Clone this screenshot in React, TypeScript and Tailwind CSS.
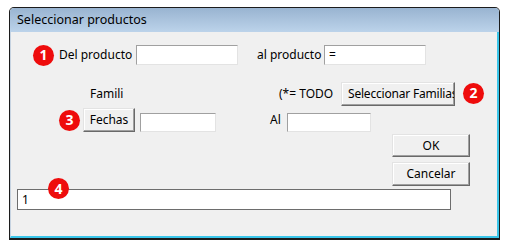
import type { ReactNode } from "react";

const font = { fontFamily: '"Noto Sans", "Open Sans", sans-serif' };

function Badge({ n, className = "" }: { n: string; className?: string }) {
  return (
    <span
      className={`flex h-[21px] w-[21px] shrink-0 items-center justify-center rounded-full bg-[#ee0c0c] text-[14px] font-bold leading-none text-white ${className}`}
    >
      {n}
    </span>
  );
}

function Btn({ children, className = "" }: { children: ReactNode; className?: string }) {
  return (
    <div
      className={`flex shrink-0 items-center overflow-hidden whitespace-nowrap border-t border-l border-r border-b border-t-[#e3e3e3] border-l-[#e3e3e3] border-r-[#696969] border-b-[#696969] bg-[#f0f0f0] text-[12px] text-black shadow-[inset_-1px_-1px_#a0a0a0,inset_1px_1px_#ffffff] ${className}`}
    >
      {children}
    </div>
  );
}

function Field({ value = "", className = "" }: { value?: string; className?: string }) {
  return (
    <div
      className={`flex shrink-0 items-center border-t border-l border-r border-b border-t-[#a0a0a0] border-l-[#a0a0a0] border-r-[#e3e3e3] border-b-[#e3e3e3] bg-white pl-[4px] text-[12px] text-black ${className}`}
    >
      {value}
    </div>
  );
}

export default function App() {
  return (
    <div className="h-[247px] w-[507px] bg-white pt-[7px] pl-[9px]" style={font}>
      <div className="flex h-[233px] w-[491px] flex-col overflow-hidden rounded-t-[5px] border border-b-2 border-[#1c1c1c]">
        <div className="flex h-[24px] items-center bg-gradient-to-b from-[#99b4d1] to-[#bcd3ea] pl-[7px] text-[12.5px] text-black">
          Seleccionar productos
        </div>
        <div className="relative flex flex-1 flex-col border-l border-r-2 border-b-2 border-l-[#c6d3e1] border-r-[#3ac6ea] border-b-[#3ac6ea] bg-[#f0f0f0] text-[12px] text-black">
          {/* row 1 */}
          <div className="mt-[13px] flex h-[20px] items-center">
            <Badge n="1" className="ml-[22px]" />
            <span className="ml-[5px] w-[77px]">Del producto</span>
            <Field className="h-[20px] w-[102px]" />
            <span className="ml-[19px] w-[67px]">al producto</span>
            <Field value="=" className="h-[20px] w-[102px]" />
          </div>

          {/* row 2 */}
          <div className="mt-[17px] flex h-[24px] items-center">
            <span className="ml-[79px] w-[189px]">Famili</span>
            <span className="w-[62px]">(*= TODO</span>
            <Btn className="h-[24px] w-[114px] pl-[6px] text-[11.5px] tracking-[-0.2px]">Seleccionar Familias</Btn>
            <Badge n="2" className="ml-[8px] -mt-[2px]" />
          </div>

          {/* row 3 */}
          <div className="mt-[2px] flex h-[24px] items-center">
            <Badge n="3" className="ml-[48px]" />
            <Btn className="ml-[3px] h-[24px] w-[52px] justify-center">Fechas</Btn>
            <Field className="ml-[5px] mt-[5px] h-[19px] w-[76px]" />
            <span className="ml-[54px] w-[17px]">Al</span>
            <Field className="mt-[5px] h-[19px] w-[84px]" />
          </div>

          {/* OK / Cancelar */}
          <div className="mt-[2px] flex">
            <Btn className="ml-[381px] h-[23px] w-[78px] justify-center">OK</Btn>
          </div>
          <div className="mt-[5px] flex">
            <Btn className="ml-[381px] h-[24px] w-[78px] justify-center">Cancelar</Btn>
          </div>

          {/* bottom field */}
          <div className="mt-[3px] flex">
            <div className="ml-[6px] flex h-[21px] w-[434px] items-center border border-[#6d6d6d] bg-white pl-[4px] text-[12px]">
              1
            </div>
          </div>
          <Badge n="4" className="absolute left-[37px] top-[146px]" />
        </div>
      </div>
    </div>
  );
}
